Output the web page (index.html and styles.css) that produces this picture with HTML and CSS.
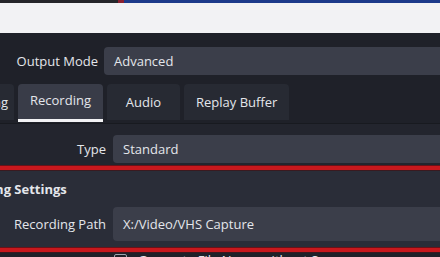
FILE: index.html
```html
<!DOCTYPE html>
<html lang="en">
<head>
  <meta charset="UTF-8">
  <title>Output Settings</title>
  <link rel="stylesheet" href="styles.css">
</head>
<body>
  <div class="topbar">
    <div class="topbar-left"></div>
    <div class="topbar-dot"></div>
    <div class="topbar-right"></div>
  </div>
  <div class="lightbar"></div>

  <div class="panel">
    <div class="row row-mode">
      <label class="label label-mode">Output Mode</label>
      <div class="field">Advanced</div>
    </div>

    <div class="tabs">
      <div class="tab tab-cut">Streaming</div>
      <div class="tab active">Recording</div>
      <div class="tab">Audio</div>
      <div class="tab">Replay Buffer</div>
    </div>

    <div class="row row-type">
      <label class="label">Type</label>
      <div class="field">Standard</div>
    </div>
    <div class="redline"></div>

    <div class="group">
      <div class="group-title">Recording Settings</div>
      <div class="row row-path">
        <label class="label">Recording Path</label>
        <div class="field field-tall">X:/Video/VHS Capture</div>
      </div>
    </div>
    <div class="redline"></div>

    <div class="check-row">
      <span class="checkbox"></span>
      <span>Generate File Name without Space</span>
    </div>
  </div>
</body>
</html>
```

FILE: styles.css
```css
/* Base */
body {
  margin: 0;
  width: 440px;
  height: 257px;
  overflow: hidden;
  font-family: "Open Sans", "Noto Sans", sans-serif;
  font-size: 13px;
  color: #e4e6eb;
  background: #1f2129;
}

/* Window strip above */
.topbar {
  display: flex;
  height: 3px;
}

.topbar-left {
  width: 118px;
  background: #25262a;
}

.topbar-dot {
  width: 6px;
  background: #8a2030;
}

.topbar-right {
  flex: 1;
  background: #1d3a8a;
}

.lightbar {
  height: 30px;
  background: #f2f2f4;
}

/* Settings panel */
.panel {
  background: #1f2129;
  padding-top: 14px;
}

.row {
  display: flex;
  align-items: center;
}

.label {
  width: 106px;
  padding-right: 7px;
  text-align: right;
  white-space: nowrap;
  flex-shrink: 0;
}

.label-mode {
  width: 98px;
  padding-right: 6px;
}

.field {
  flex: 1;
  height: 28px;
  line-height: 28px;
  padding-left: 10px;
  background: #3b3e4a;
  border-radius: 4px 0 0 4px;
  white-space: nowrap;
}

.field-tall {
  height: 34px;
  line-height: 34px;
}

/* Tabs */
.tabs {
  display: flex;
  gap: 4px;
  margin-top: 9px;
  margin-left: -66px;
  height: 39px;
  border-bottom: 1px solid #181a20;
}

.tab {
  min-width: 49px;
  height: 36px;
  line-height: 36px;
  padding: 0 12px;
  text-align: center;
  background: #272a33;
  border-radius: 4px 4px 0 0;
  white-space: nowrap;
}

.tab.active {
  background: #393c48;
  border-bottom: 3px solid #f2f2f4;
  height: 35px;
  line-height: 33px;
}

.tab-cut {
  width: 56px;
  overflow: hidden;
}

.row-type {
  background: #23252e;
  padding: 11px 0 2px;
}

.redline {
  height: 4px;
  background: #c8181d;
  border-top: 1px solid #6a1218;
  border-bottom: 1px solid #3a1a20;
}

/* Group */
.group {
  background: #2a2d38;
  padding-top: 10px;
  padding-bottom: 6px;
}

.group-title {
  font-weight: bold;
  margin-left: -54px;
  height: 26px;
  line-height: 16px;
}

/* Checkbox row */
.check-row {
  display: flex;
  align-items: flex-start;
  gap: 11px;
  padding-left: 114px;
  line-height: 14px;
}

.checkbox {
  width: 11px;
  height: 11px;
  border: 1px solid #a0a4ae;
  border-radius: 2px;
  margin-top: 1px;
}
```
